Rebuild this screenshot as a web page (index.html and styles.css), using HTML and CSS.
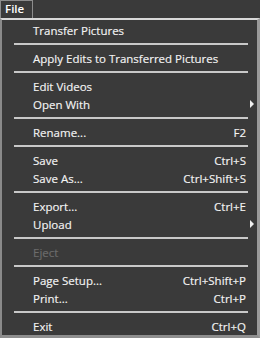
FILE: index.html
```html
<!DOCTYPE html>
<html lang="en">
<head>
    <meta charset="UTF-8">
    <title>File menu</title>
    <link rel="stylesheet" href="styles.css">
</head>
<body>
    <div class="menubar">
        <div class="menu-title">File</div>
    </div>

    <div class="dropdown">
        <div class="item"><span class="label">Transfer Pictures</span></div>
        <div class="sep"></div>
        <div class="item"><span class="label">Apply Edits to Transferred Pictures</span></div>
        <div class="sep"></div>
        <div class="item"><span class="label">Edit Videos</span></div>
        <div class="item"><span class="label">Open With</span><span class="arrow"></span></div>
        <div class="sep"></div>
        <div class="item"><span class="label">Rename...</span><span class="shortcut">F2</span></div>
        <div class="sep"></div>
        <div class="item"><span class="label">Save</span><span class="shortcut">Ctrl+S</span></div>
        <div class="item"><span class="label">Save As...</span><span class="shortcut">Ctrl+Shift+S</span></div>
        <div class="sep"></div>
        <div class="item"><span class="label">Export...</span><span class="shortcut">Ctrl+E</span></div>
        <div class="item"><span class="label">Upload</span><span class="arrow"></span></div>
        <div class="sep"></div>
        <div class="item disabled"><span class="label">Eject</span></div>
        <div class="sep"></div>
        <div class="item"><span class="label">Page Setup...</span><span class="shortcut">Ctrl+Shift+P</span></div>
        <div class="item"><span class="label">Print...</span><span class="shortcut">Ctrl+P</span></div>
        <div class="sep"></div>
        <div class="item"><span class="label">Exit</span><span class="shortcut">Ctrl+Q</span></div>
    </div>
</body>
</html>
```

FILE: styles.css
```css
* {
    margin: 0;
    padding: 0;
    box-sizing: border-box;
}

body {
    font-family: 'Open Sans', 'Noto Sans', sans-serif;
    font-size: 11.5px;
    background-color: #3a3a3a;
    color: #f4f4f4;
    width: 260px;
    height: 338px;
    overflow: hidden;
}

.menubar {
    height: 18px;
    display: flex;
}

.menu-title {
    width: 33px;
    height: 18px;
    border: 1px solid #8c8c8c;
    border-bottom: none;
    padding-left: 4px;
    font-weight: 600;
    line-height: 16px;
    color: #ffffff;
}

.dropdown {
    border-top: 2px solid #d8d8d8;
    border-left: 2px solid #8a8a8a;
    border-right: 3px solid #9a9a9a;
    border-bottom: 3px solid #8e8e8e;
    padding-top: 1px;
    height: 320px;
}

.item {
    display: flex;
    align-items: center;
    height: 18px;
    padding: 0 3px 0 31px;
    -webkit-text-stroke: 0.15px currentColor;
}

.label {
    flex: 1;
    white-space: nowrap;
}

.shortcut {
    white-space: nowrap;
    margin-right: 8px;
}

.arrow {
    width: 4px;
    height: 8px;
    border-left: 4px solid #f0f0f0;
    border-top: 4px solid transparent;
    border-bottom: 4px solid transparent;
    margin-left: 4px;
}

.disabled {
    color: #6c6c6c;
}

.sep {
    height: 10px;
    padding-top: 4px;
    margin: 0 9px 0 12px;
}

.sep::before {
    content: "";
    display: block;
    height: 2px;
    background-color: #c8c8c8;
}
```
